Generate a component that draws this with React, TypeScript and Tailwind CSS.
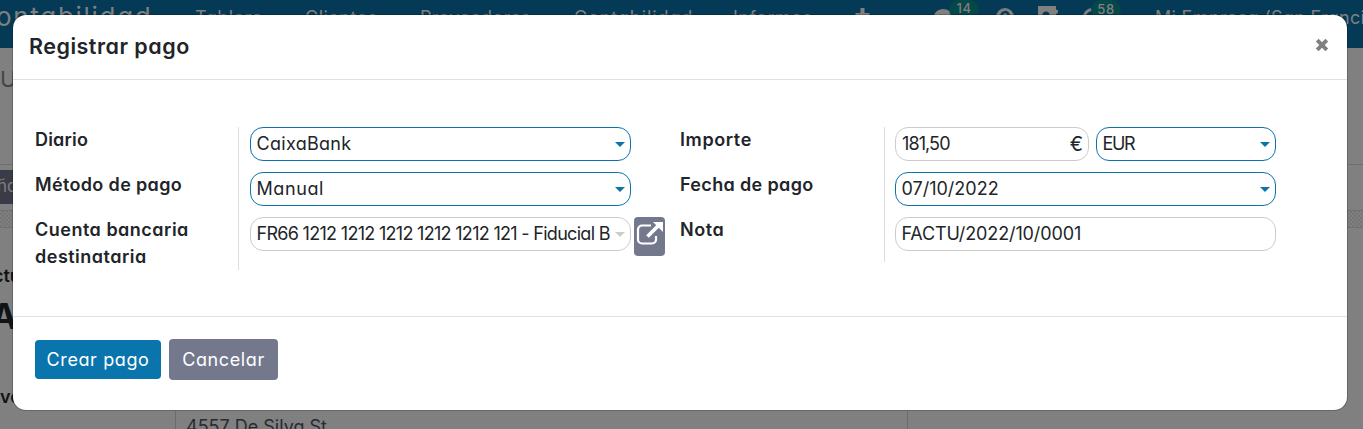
import type { ReactNode } from "react";

function Caret({ muted = false }: { muted?: boolean }) {
  return (
    <svg viewBox="0 0 10 5" className={`h-[5px] w-[10px] shrink-0 ${muted ? "text-[#cccccc]" : "text-[#0a74ad]"}`}>
      <path d="M0 0h10L5 5z" fill="currentColor" />
    </svg>
  );
}

function Field({
  children,
  tracking,
  required = false,
  caret,
  width,
}: {
  children: ReactNode;
  tracking: string;
  required?: boolean;
  caret?: "active" | "muted";
  width: string;
}) {
  return (
    <div
      className={`flex h-[34px] shrink-0 items-center justify-between rounded-[13px] border bg-white pl-[5.5px] pr-[5px] whitespace-nowrap ${required ? "border-[#0a74ad]" : "border-[#cccccc]"} ${width}`}
    >
      <span className={`-mt-px ${tracking}`}>{children}</span>
      {caret && <Caret muted={caret === "muted"} />}
    </div>
  );
}

function Label({ children, tracking }: { children: ReactNode; tracking: string }) {
  return <div className={`-mt-px mb-px text-[18px] leading-[27px] font-semibold ${tracking}`}>{children}</div>;
}

function Backdrop() {
  return (
    <div className="h-[429px] overflow-hidden bg-[#808080]">
      <nav className="h-12 overflow-hidden bg-[#043a56] text-[18px] whitespace-nowrap text-[#808080]">
        <div className="flex h-[34px] items-center *:shrink-0">
          <span className="-mt-[2px] -ml-[4px] w-[199px] text-[26px] tracking-[1.7px]">ontabilidad</span>
          <span className="w-[110px] tracking-[0.5px]">Tablero</span>
          <span className="w-[115px] tracking-[0.5px]">Clientes</span>
          <span className="w-[154px] tracking-[0.3px]">Proveedores</span>
          <span className="w-[159px] tracking-[0.9px]">Contabilidad</span>
          <span className="w-[122px] tracking-[0.5px]">Informes</span>
          <svg viewBox="0 0 14 14" className="mr-[64px] -mt-[4px] h-[14px] w-[15px]">
            <path d="M5 0h4v5h5v4H9v5H5V9H0V5h5z" fill="currentColor" />
          </svg>
          <svg viewBox="0 0 18 16" className="h-4 w-[18px]">
            <path d="M9 0c5 0 9 3 9 7s-4 7-9 7l-5 2 1-3C2 12 0 10 0 7s4-7 9-7z" fill="currentColor" />
          </svg>
          <span className="mr-[17px] -ml-[3px] flex h-[19px] w-[30px] items-center justify-center self-start rounded-full bg-[#04484a] pb-[2px] text-[13px] font-medium tracking-[0.6px]">14</span>
          <svg viewBox="0 0 18 18" className="mr-[24px] h-[18px] w-[18px]">
            <circle cx="9" cy="9" r="9" fill="currentColor" />
            <path d="M5.5 8c0-5 7-5 7-1 0 2-3 2-3 5M9 13v2" stroke="#043a56" strokeWidth="2.5" fill="none" />
          </svg>
          <svg viewBox="0 0 20 20" className="mr-[25px] -mt-[2px] h-5 w-5">
            <path d="M0 0h18v4c3-1 3 3 0 4v8H0z" fill="currentColor" />
            <circle cx="8" cy="9" r="3.5" fill="#043a56" />
          </svg>
          <svg viewBox="0 0 18 18" className="h-[18px] w-[18px]">
            <circle cx="9" cy="9" r="7.5" stroke="currentColor" strokeWidth="3" fill="none" />
          </svg>
          <span className="-ml-[10px] flex h-[19px] w-[30px] items-center justify-center self-start rounded-full bg-[#04484a] text-[13px] font-medium tracking-[0.6px]">58</span>
          <span className="ml-[34px] tracking-[0.3px]">Mi Empresa (San Franci</span>
        </div>
      </nav>
      <div className="h-[117px] border-b border-[#6f6f72] pt-[15px] text-[22px] text-[#262b30]/70">U</div>
      <div className="flex h-[46px] border-b border-[#6f6f72] pt-[5px]">
        <div className="flex h-[34px] w-10 items-center bg-[#393b46] text-[17px] text-[#808080]">
          <span className="-ml-[3px]">ño</span>
        </div>
      </div>
      <div className="h-[17px] border-b border-[#6f6f78] bg-[#7c7c7c] bg-[repeating-conic-gradient(#757575_0_25%,#808080_0_50%)] bg-size-[4px_4px]" />
      <div className="h-[183px] text-[#111315]">
        <div className="-ml-[7px] h-[65px] pt-[34px] text-[18px] leading-[27px] font-semibold">ctu</div>
        <div className="-ml-[9px] h-[92px] text-[35px] leading-[46px] font-bold">A</div>
        <div className="-mt-4 h-[42px] text-[18px] leading-[56px] font-semibold">ve</div>
        <div className="flex h-[60px] pl-[175px]">
          <div className="w-[732px] border-l border-[#6b6b6b] pt-[3px] pl-[10px] text-[18px] leading-[26px] text-[#262b30]">4557 De Silva St</div>
          <div className="border-l border-[#6b6b6b]" />
        </div>
      </div>
    </div>
  );
}

export default function App() {
  return (
    <div className="relative h-[429px] w-[1363px] overflow-hidden [font-family:Inter,'Open_Sans',sans-serif] text-[#212529] [font-feature-settings:'cv11']">
      <Backdrop />
      <section className="absolute top-[14px] left-[12px] flex h-[397px] w-[1336px] flex-col rounded-[14px] border border-black/20 bg-white bg-clip-padding text-[18px]">
        <header className="flex h-[65px] shrink-0 items-center justify-between border-b border-[#dee2e6] pr-[18px] pl-4">
          <h1 className="-mt-[2px] text-[21.5px] font-semibold tracking-[0.5px]">Registrar pago</h1>
          <svg viewBox="0 0 14 14" className="-mt-[5px] h-[14px] w-[14px]">
            <path d="M2.2 2.2l9.6 9.6M11.8 2.2l-9.6 9.6" stroke="#808080" strokeWidth="3.9" />
          </svg>
        </header>

        <main className="flex h-[236px] shrink-0 items-start pt-[47px] pl-[22px]">
          <div className="flex h-[143px] w-[204px] shrink-0 flex-col gap-[18px] border-r border-[#dddddd]">
            <Label tracking="tracking-[0.2px]">Diario</Label>
            <Label tracking="tracking-[0.35px]">Método de pago</Label>
            <Label tracking="tracking-[0.5px]">Cuenta bancaria destinataria</Label>
          </div>
          <div className="ml-[11px] flex w-[430px] shrink-0 flex-col gap-[11px]">
            <Field width="w-[381px]" required caret="active" tracking="tracking-[0.3px]">CaixaBank</Field>
            <Field width="w-[381px]" required caret="active" tracking="tracking-[0.6px]">Manual</Field>
            <div className="flex h-[34px] items-start gap-[3px]">
              <Field width="w-[381px]" caret="muted" tracking="tracking-[-0.7px]">
                FR66 1212 1212 1212 1212 1212 121 - Fiducial B
              </Field>
              <button className="flex h-[39px] w-[31px] shrink-0 justify-center rounded-[4px] bg-[#74788d] pt-[5px]">
                <svg viewBox="0 0 27 24" className="h-6 w-[27px]" fill="none">
                  <path d="M15 3.5H6a4 4 0 0 0-4 4v10a4 4 0 0 0 4 4h10a4 4 0 0 0 4-4V14" stroke="white" strokeWidth="2.2" />
                  <path d="M11.5 14.5L22 4" stroke="white" strokeWidth="3.8" />
                  <path d="M17 0h10v10z" fill="white" />
                </svg>
              </button>
            </div>
          </div>
          <div className="flex h-[135px] w-[205px] shrink-0 flex-col gap-[18px] border-r border-[#dddddd]">
            <Label tracking="tracking-[0.6px]">Importe</Label>
            <Label tracking="tracking-[0.35px]">Fecha de pago</Label>
            <Label tracking="tracking-[0.6px]">Nota</Label>
          </div>
          <div className="ml-[10px] flex w-[381px] shrink-0 flex-col gap-[11px]">
            <div className="flex gap-[7px]">
              <div className="flex h-[34px] w-[194px] items-center justify-between rounded-[13px] border border-[#cccccc] pr-[5px] pl-[6px]">
                <span className="-mt-px tracking-[-0.9px]">181,50</span>
                <span className="text-[20px]">€</span>
              </div>
              <Field width="w-[180px]" required caret="active" tracking="tracking-[-1.4px]">EUR</Field>
            </div>
            <Field width="w-[381px]" required caret="active" tracking="tracking-[0px]">07/10/2022</Field>
            <Field width="w-[381px]" tracking="tracking-[-0.12px]">FACTU/2022/10/0001</Field>
          </div>
        </main>

        <footer className="flex flex-1 items-start gap-2 border-t border-[#dee2e6] pt-[22px] pl-[22px] text-white">
          <button className="mt-[1px] flex h-[39px] w-[126px] items-center justify-center rounded-[4px] bg-[#0a74ad] tracking-[0.6px]">Crear pago</button>
          <button className="flex h-[41px] w-[109px] items-center justify-center rounded-[4px] bg-[#74788d] tracking-[0.6px]">Cancelar</button>
        </footer>
      </section>
    </div>
  );
}
